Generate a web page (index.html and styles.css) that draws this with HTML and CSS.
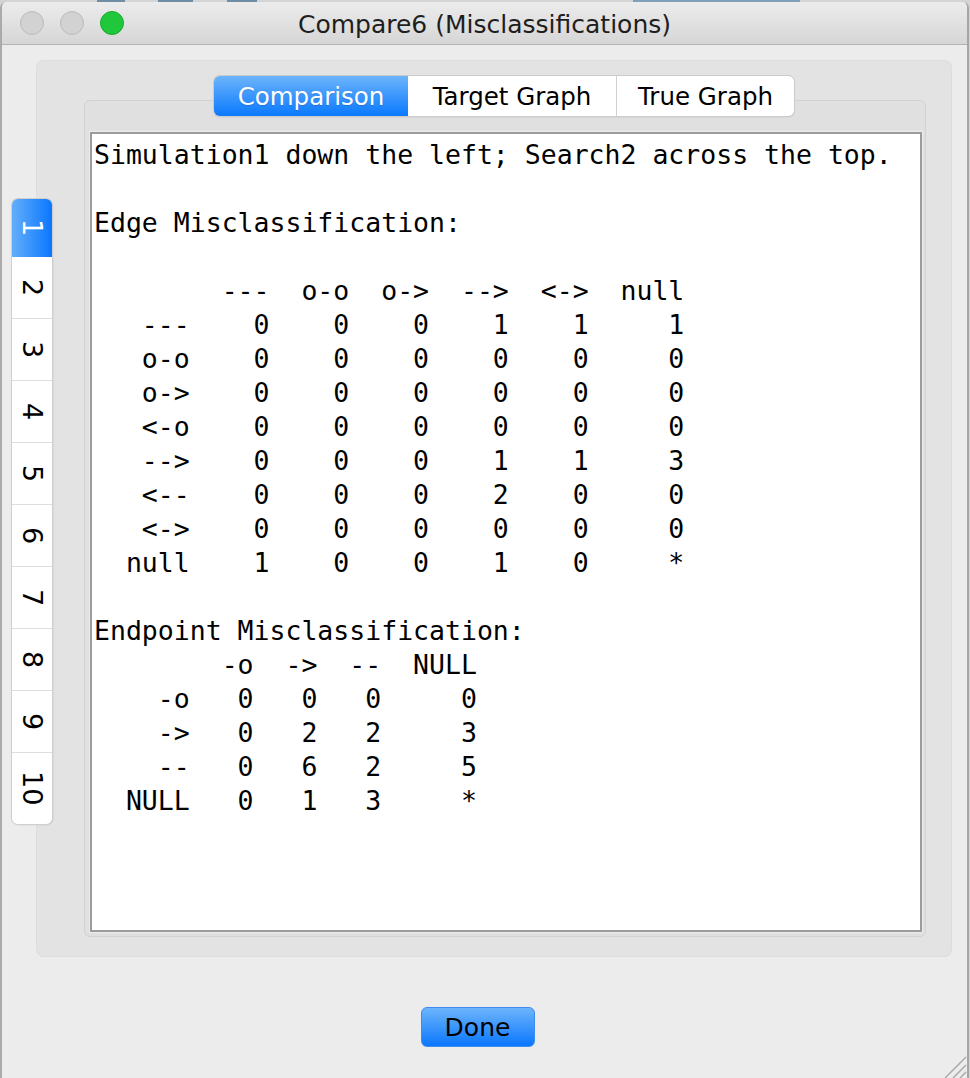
FILE: index.html
```html
<!DOCTYPE html>
<html>
<head>
<meta charset="utf-8">
<title>Compare6 (Misclassifications)</title>
<link rel="stylesheet" href="styles.css">
</head>
<body>
<div class="window">
  <div class="titlebar">
    <div class="lights">
      <span class="light gray"></span>
      <span class="light gray"></span>
      <span class="light green"></span>
    </div>
    <div class="title">Compare6 (Misclassifications)</div>
    <div></div>
  </div>
  <div class="content">
    <div class="vpane">
      <div class="vtabs">
        <div class="vtab sel first"><span>1</span></div>
        <div class="vtab"><span>2</span></div>
        <div class="vtab"><span>3</span></div>
        <div class="vtab"><span>4</span></div>
        <div class="vtab"><span>5</span></div>
        <div class="vtab"><span>6</span></div>
        <div class="vtab"><span>7</span></div>
        <div class="vtab"><span>8</span></div>
        <div class="vtab"><span>9</span></div>
        <div class="vtab last"><span>10</span></div>
      </div>
      <div class="outer">
        <div class="htabs">
          <div class="htab sel t-comp">Comparison</div>
          <div class="htab t-target">Target Graph</div>
          <div class="htab t-true">True Graph</div>
        </div>
        <div class="inner">
          <div class="textarea"><pre>Simulation1 down the left; Search2 across the top.

Edge Misclassification:

        ---  o-o  o-&gt;  --&gt;  &lt;-&gt;  null
   ---    0    0    0    1    1     1
   o-o    0    0    0    0    0     0
   o-&gt;    0    0    0    0    0     0
   &lt;-o    0    0    0    0    0     0
   --&gt;    0    0    0    1    1     3
   &lt;--    0    0    0    2    0     0
   &lt;-&gt;    0    0    0    0    0     0
  null    1    0    0    1    0     *

Endpoint Misclassification:
        -o  -&gt;  --  NULL
    -o   0   0   0     0
    -&gt;   0   2   2     3
    --   0   6   2     5
  NULL   0   1   3     *</pre></div>
        </div>
      </div>
    </div>
    <div class="footer">
      <button class="done">Done</button>
    </div>
  </div>
  <svg class="grip" width="24" height="24" viewBox="0 0 24 24">
    <line x1="2" y1="24" x2="23" y2="3" stroke="#a9a9a9" stroke-width="1.5"/>
    <line x1="10" y1="24" x2="23" y2="11" stroke="#a9a9a9" stroke-width="1.5"/>
    <line x1="17" y1="24" x2="23" y2="18" stroke="#a9a9a9" stroke-width="1.5"/>
  </svg>
</div>
</body>
</html>
```

FILE: styles.css
```css
html, body {
  margin: 0;
  padding: 0;
}
body {
  width: 970px;
  height: 1078px;
  overflow: hidden;
  background: #d4d4d4;
  background-image:
    linear-gradient(to right, transparent 97px, #6f8ea6 97px, #6f8ea6 125px, transparent 125px,
      transparent 158px, #6f8ea6 158px, #6f8ea6 193px, transparent 193px,
      transparent 227px, #6f8ea6 227px, #6f8ea6 257px, transparent 257px,
      transparent 633px, #7f9fb8 633px, #7f9fb8 800px, transparent 800px);
  background-size: 970px 2px;
  background-repeat: no-repeat;
  font-family: "DejaVu Sans", "Liberation Sans", sans-serif;
}

.window {
  position: relative;
  box-sizing: border-box;
  width: 969px;
  height: 1076px;
  margin-top: 2px;
  background: #ececec;
  border-left: 2px solid #aaaaaa;
  border-right: 2px solid #a6a6a6;
  border-radius: 6px 6px 0 0;
  overflow: hidden;
}

/* Title bar */
.titlebar {
  height: 42px;
  display: grid;
  grid-template-columns: 1fr auto 1fr;
  align-items: center;
  background: linear-gradient(to bottom, #ececec, #d6d6d6);
  border-bottom: 1px solid #b3b3b3;
}
.lights {
  display: flex;
  gap: 16px;
  padding-left: 18px;
}
.light {
  width: 24px;
  height: 24px;
  box-sizing: border-box;
  border-radius: 50%;
}
.light.gray {
  background: #d2d2d2;
  border: 1px solid #bcbcbc;
}
.light.green {
  background: #1fc73b;
  border: 1px solid #17ab2e;
}
.title {
  font-size: 25px;
  color: #1e1e1e;
  padding-top: 3px;
}

/* Content */
.content {
  padding: 15px 15px 0 10px;
}
.vpane {
  display: flex;
  align-items: flex-start;
  height: 897px;
}
.vtabs {
  position: relative;
  z-index: 1;
  width: 40px;
  margin-top: 139px;
  display: flex;
  flex-direction: column;
  box-shadow: 0 0 0 1px #cfcfcf, 1px 1px 2px rgba(0,0,0,0.12);
  border-radius: 6px;
}
.vtab {
  box-sizing: border-box;
  width: 40px;
  height: 62px;
  background: #ffffff;
  border-bottom: 1px solid #dedede;
  display: flex;
  align-items: center;
  justify-content: center;
  font-size: 27px;
  color: #000;
}
.vtab span {
  writing-mode: vertical-rl;
  line-height: 40px;
}
.vtab.first {
  height: 58px;
  border-radius: 6px 6px 0 0;
}
.vtab.last {
  height: 71px;
  border-bottom: none;
  border-radius: 0 0 6px 6px;
}
.vtab.sel {
  background: linear-gradient(to right, #63aefb, #0a77fe);
  color: #ffffff;
  border-bottom: none;
}

.outer {
  box-sizing: border-box;
  flex: 1;
  height: 897px;
  margin-left: -16px;
  padding: 16px 26px 20px 48px;
  background: #e3e3e3;
  border-radius: 8px;
  box-shadow: inset 0 0 0 1px #dddddd;
  display: flex;
  flex-direction: column;
  align-items: center;
}
.htabs {
  position: relative;
  z-index: 1;
  display: flex;
  height: 40px;
  margin-left: -2px;
  border-radius: 6px;
  box-shadow: 0 0 0 1px #cbcbcb, 0 1px 2px rgba(0,0,0,0.15);
}
.htab {
  box-sizing: border-box;
  height: 40px;
  background: #ffffff;
  font-size: 24.5px;
  color: #000;
  display: flex;
  align-items: center;
  justify-content: center;
}
.t-comp { width: 194px; border-radius: 6px 0 0 6px; }
.t-target { width: 208px; }
.t-true { width: 178px; border-left: 1px solid #d2d2d2; border-radius: 0 6px 6px 0; }
.htab.sel {
  background: linear-gradient(to bottom, #6cb4fb, #0a79ff);
  color: #ffffff;
  text-shadow: 0 1px 1px rgba(0,0,0,0.15);
}

.inner {
  box-sizing: border-box;
  align-self: stretch;
  flex: 1;
  margin-top: -16px;
  padding: 31px 3px 4px 5px;
  background: #e0e0e0;
  border: 1px solid #d2d2d2;
  border-radius: 6px;
  display: flex;
  flex-direction: column;
}
.textarea {
  flex: 1;
  background: #ffffff;
  border: 2px solid #9b9b9b;
  box-shadow: 0 0 0 1px #ebebeb;
  overflow: hidden;
}
.textarea pre {
  margin: 0;
  padding: 4px 0 0 2px;
  font-family: "DejaVu Sans Mono", "Liberation Mono", monospace;
  font-variant-numeric: slashed-zero;
  font-size: 26.5px;
  line-height: 34px;
  color: #000;
}

/* Footer */
.footer {
  display: flex;
  justify-content: center;
  padding-top: 50px;
}
.done {
  width: 114px;
  height: 40px;
  margin-right: 9px;
  padding: 0;
  border: 1px solid #3f8cf1;
  border-radius: 6px;
  background: linear-gradient(to bottom, #6db4fb, #0a77fe);
  font-family: "DejaVu Sans", "Liberation Sans", sans-serif;
  font-size: 25px;
  color: #000;
}

.grip {
  position: absolute;
  right: 0;
  bottom: 0;
}
```
